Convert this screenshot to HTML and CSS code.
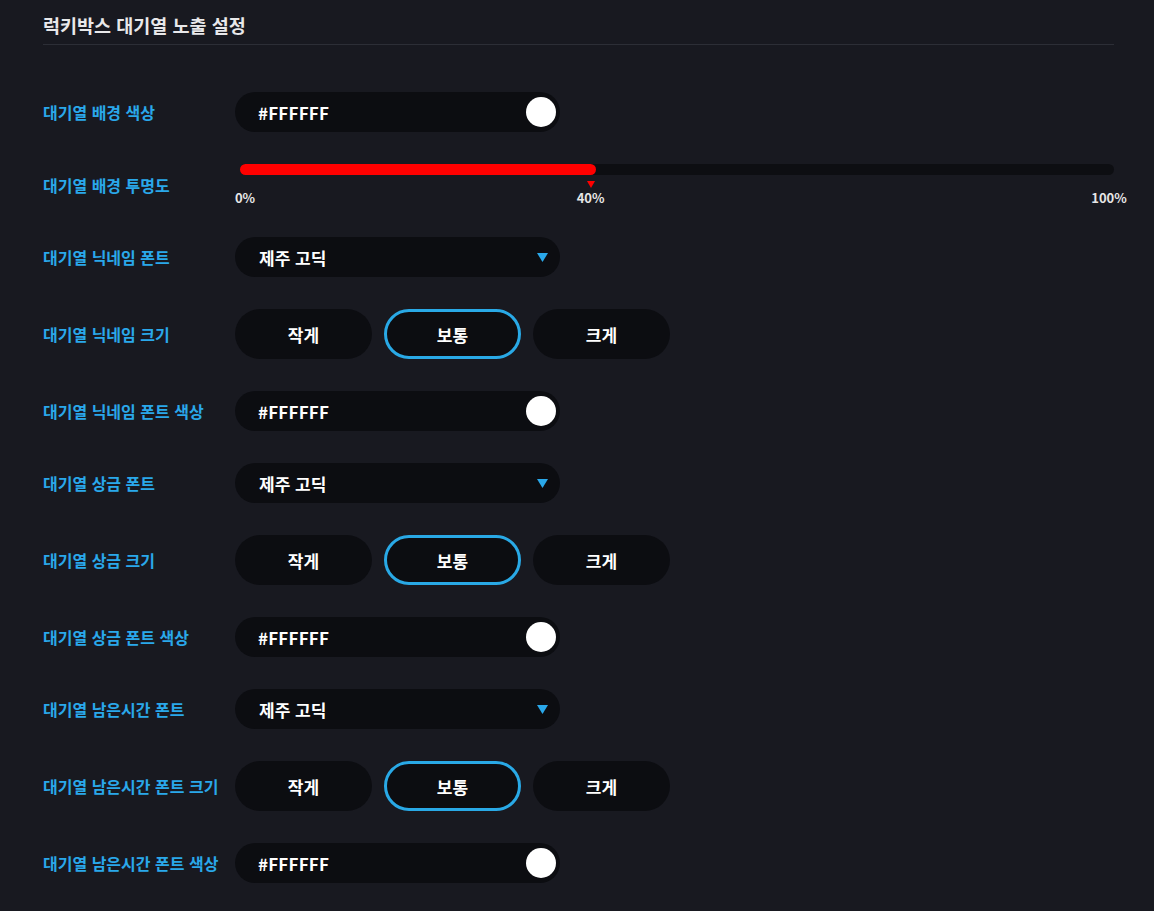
FILE: index.html
```html
<!DOCTYPE html>
<html lang="ko">
<head>
<meta charset="utf-8">
<title>럭키박스 대기열 노출 설정</title>
<link rel="stylesheet" href="styles.css">
</head>
<body>
<div class="panel">
  <h2 class="title">럭키박스 대기열 노출 설정</h2>
  <div class="rows">
    <div class="row">
      <div class="label">대기열 배경 색상</div>
      <div class="pill color-pill"><span class="value hex">#FFFFFF</span><span class="swatch"></span></div>
    </div>
    <div class="row">
      <div class="label">대기열 배경 투명도</div>
      <div class="slider">
        <div class="track"><div class="fill" style="width: calc(11px + (100% - 11px) * 0.4)"></div></div>
        <div class="scale">
          <span class="marker" style="left: 40%"></span>
          <span class="tick" style="left: 0%">0%</span>
          <span class="tick" style="left: 40%">40%</span>
          <span class="tick" style="left: 100%">100%</span>
        </div>
      </div>
    </div>
    <div class="row">
      <div class="label">대기열 닉네임 폰트</div>
      <div class="pill select-pill"><span class="value">제주 고딕</span><svg class="arrow" width="11" height="9" viewBox="0 0 11 9"><path d="M0 0H11L5.5 9Z"/></svg></div>
    </div>
    <div class="row">
      <div class="label">대기열 닉네임 크기</div>
      <div class="seg"><span class="btn">작게</span><span class="btn active">보통</span><span class="btn">크게</span></div>
    </div>
    <div class="row">
      <div class="label">대기열 닉네임 폰트 색상</div>
      <div class="pill color-pill"><span class="value hex">#FFFFFF</span><span class="swatch"></span></div>
    </div>
    <div class="row">
      <div class="label">대기열 상금 폰트</div>
      <div class="pill select-pill"><span class="value">제주 고딕</span><svg class="arrow" width="11" height="9" viewBox="0 0 11 9"><path d="M0 0H11L5.5 9Z"/></svg></div>
    </div>
    <div class="row">
      <div class="label">대기열 상금 크기</div>
      <div class="seg"><span class="btn">작게</span><span class="btn active">보통</span><span class="btn">크게</span></div>
    </div>
    <div class="row">
      <div class="label">대기열 상금 폰트 색상</div>
      <div class="pill color-pill"><span class="value hex">#FFFFFF</span><span class="swatch"></span></div>
    </div>
    <div class="row">
      <div class="label">대기열 남은시간 폰트</div>
      <div class="pill select-pill"><span class="value">제주 고딕</span><svg class="arrow" width="11" height="9" viewBox="0 0 11 9"><path d="M0 0H11L5.5 9Z"/></svg></div>
    </div>
    <div class="row">
      <div class="label">대기열 남은시간 폰트 크기</div>
      <div class="seg"><span class="btn">작게</span><span class="btn active">보통</span><span class="btn">크게</span></div>
    </div>
    <div class="row">
      <div class="label">대기열 남은시간 폰트 색상</div>
      <div class="pill color-pill"><span class="value hex">#FFFFFF</span><span class="swatch"></span></div>
    </div>
  </div>
</div>
</body>
</html>
```

FILE: styles.css
```css
* { box-sizing: border-box; }
html, body {
  margin: 0;
  background: #181920;
}
body {
  font-family: "Noto Sans CJK KR", "Noto Sans", sans-serif;
  color: #ffffff;
}
.panel {
  padding: 13px 40px 0 43px;
}
.title {
  margin: 0;
  font-size: 18.5px;
  font-weight: 700;
  line-height: 24px;
  color: #e8e8ea;
  padding-bottom: 7px;
  border-bottom: 1px solid #2c2e36;
}
.rows {
  margin-top: 47px;
  display: flex;
  flex-direction: column;
  gap: 32px;
}
.row {
  display: flex;
  align-items: center;
}
.label {
  width: 192px;
  flex-shrink: 0;
  font-size: 16px;
  font-weight: 700;
  color: #2aa8ea;
  line-height: 20px;
  white-space: nowrap;
}
.pill {
  width: 325px;
  height: 40px;
  border-radius: 20px;
  background: #0c0d11;
  display: flex;
  align-items: center;
  justify-content: space-between;
}
.value {
  font-size: 17px;
  font-weight: 700;
  color: #ffffff;
}
.value.hex {
  letter-spacing: 0.2px;
}
.color-pill {
  padding: 0 4px 0 23px;
}
.swatch {
  width: 30px;
  height: 30px;
  border-radius: 50%;
  background: #ffffff;
}
.select-pill {
  padding: 0 12px 0 24px;
}
.arrow path { fill: #2aa8ea; }
.slider {
  flex: 1;
  margin-left: 5px;
}
.track {
  height: 11px;
  border-radius: 6px;
  background: #0d0e12;
}
.fill {
  height: 100%;
  border-radius: 6px;
  background: #ff0000;
}
.scale {
  position: relative;
  margin: 0 5px;
  height: 30px;
}
.marker {
  position: absolute;
  top: 6px;
  width: 0;
  height: 0;
  margin-left: -4px;
  border-left: 4px solid transparent;
  border-right: 4px solid transparent;
  border-top: 7px solid #ff0000;
}
.tick {
  position: absolute;
  top: 15px;
  transform: translateX(-50%);
  font-size: 13px;
  font-weight: 700;
  line-height: 15px;
  color: #e6e6e6;
}
.seg {
  display: flex;
  gap: 12px;
}
.btn {
  width: 137px;
  height: 50px;
  border-radius: 25px;
  background: #0c0d11;
  display: flex;
  align-items: center;
  justify-content: center;
  font-size: 17px;
  font-weight: 700;
  color: #ffffff;
}
.btn.active {
  border: 3px solid #29a9e6;
}
```
